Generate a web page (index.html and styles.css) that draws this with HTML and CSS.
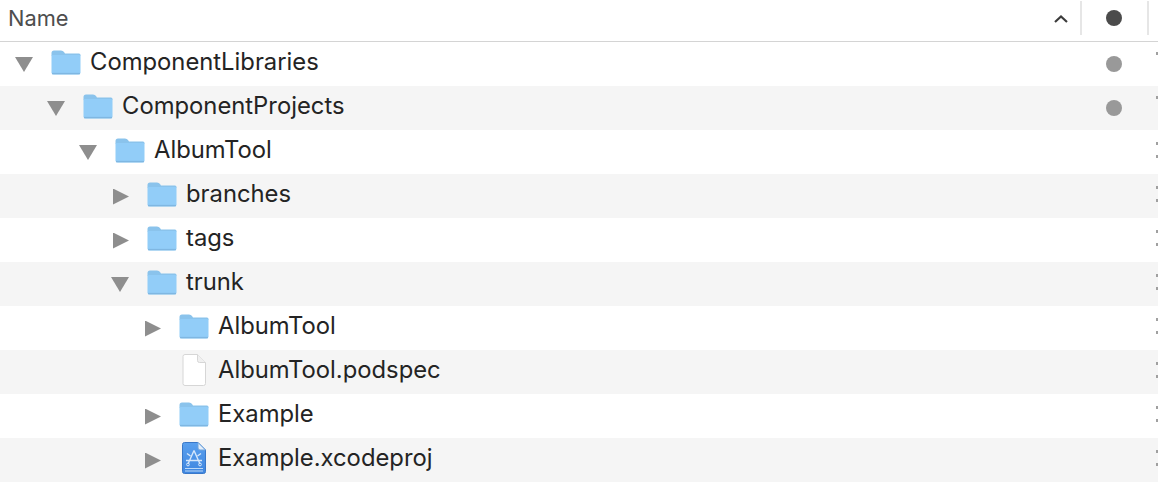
FILE: index.html
```html
<!DOCTYPE html>
<html lang="en">
<head>
    <meta charset="UTF-8">
    <meta name="viewport" content="width=device-width, initial-scale=1.0">
    <title>Finder list</title>
    <link rel="stylesheet" href="styles.css">
</head>
<body>
    <svg class="defs" width="0" height="0">
        <symbol id="folder" viewBox="0 0 30 25">
            <path d="M0.5 3 Q0.5 0.5 3 0.5 H10 Q12 0.5 13 2 L14 3.5 H28 Q29.5 3.5 29.5 5 V6 H0.5 Z" fill="#8ac3ec"/>
            <path d="M0.5 6 Q0.5 5 2 5 H28 Q29.5 5 29.5 6 V22.5 Q29.5 24.5 27.5 24.5 H2.5 Q0.5 24.5 0.5 22.5 Z" fill="#92cdf8"/>
            <path d="M1 23.6 H29" stroke="#7fb7e2" stroke-width="1.4"/>
        </symbol>
        <linearGradient id="xcode-fill" x1="0" y1="0" x2="0" y2="1">
            <stop offset="0" stop-color="#5aa0ee"/>
            <stop offset="1" stop-color="#3f86e0"/>
        </linearGradient>
    </svg>

    <div class="header">
        <span class="header-name">Name</span>
        <svg class="caret" width="16" height="10" viewBox="0 0 16 10">
            <path d="M2 8 L8 2.5 L14 8" fill="none" stroke="#3c3c3c" stroke-width="2.2"/>
        </svg>
        <span class="sep"></span>
        <span class="dot-col"><span class="dot dot-dark"></span></span>
        <span class="sep"></span>
    </div>

    <div class="row depth-0">
        <span class="arrow down"></span>
        <svg class="icon folder"><use href="#folder"/></svg>
        <span class="label">ComponentLibraries</span>
        <span class="dot-col"><span class="dot"></span></span>
        <span class="date one"></span>
    </div>
    <div class="row depth-1">
        <span class="arrow down"></span>
        <svg class="icon folder"><use href="#folder"/></svg>
        <span class="label">ComponentProjects</span>
        <span class="dot-col"><span class="dot"></span></span>
        <span class="date one"></span>
    </div>
    <div class="row depth-2">
        <span class="arrow down"></span>
        <svg class="icon folder"><use href="#folder"/></svg>
        <span class="label">AlbumTool</span>
        <span class="date"></span>
    </div>
    <div class="row depth-3">
        <span class="arrow right"></span>
        <svg class="icon folder"><use href="#folder"/></svg>
        <span class="label">branches</span>
        <span class="date"></span>
    </div>
    <div class="row depth-3">
        <span class="arrow right"></span>
        <svg class="icon folder"><use href="#folder"/></svg>
        <span class="label">tags</span>
        <span class="date"></span>
    </div>
    <div class="row depth-3">
        <span class="arrow down"></span>
        <svg class="icon folder"><use href="#folder"/></svg>
        <span class="label">trunk</span>
        <span class="date"></span>
    </div>
    <div class="row depth-4">
        <span class="arrow right"></span>
        <svg class="icon folder"><use href="#folder"/></svg>
        <span class="label">AlbumTool</span>
        <span class="date"></span>
    </div>
    <div class="row depth-4">
        <span class="arrow none"></span>
        <svg class="icon doc" viewBox="0 0 24 32">
            <path d="M1 2.5 Q1 0.5 3 0.5 H15.5 L23.5 8.5 V29.5 Q23.5 31.5 21.5 31.5 H3 Q1 31.5 1 29.5 Z" fill="#fff" stroke="#d6d6d6"/>
            <path d="M15.5 0.5 V6.5 Q15.5 8.5 17.5 8.5 H23.5" fill="#f0f0f0" stroke="#d6d6d6"/>
        </svg>
        <span class="label">AlbumTool.podspec</span>
        <span class="date"></span>
    </div>
    <div class="row depth-4">
        <span class="arrow right"></span>
        <svg class="icon folder"><use href="#folder"/></svg>
        <span class="label">Example</span>
        <span class="date"></span>
    </div>
    <div class="row depth-4">
        <span class="arrow right"></span>
        <svg class="icon doc" viewBox="0 0 24 32">
            <path d="M0.5 2.5 Q0.5 0.5 2.5 0.5 H16 L23.5 8 V29.5 Q23.5 31.5 21.5 31.5 H2.5 Q0.5 31.5 0.5 29.5 Z" fill="url(#xcode-fill)" stroke="#3a78c8"/>
            <path d="M16 0.5 V6 Q16 8 18 8 H23.5 Z" fill="#e4eef9" stroke="#6fa3dc"/>
            <path d="M3 26.5 H21 M3 29 H21" stroke="#bcd9f7" stroke-width="1"/>
            <path d="M12 8.5 L6 22 M12 8.5 L18 22 M4 18.5 H20 M8.5 14 L5 11.5 M15.5 14 L19 11.5" fill="none" stroke="#d6e7fb" stroke-width="1.4"/>
            <circle cx="6" cy="22.5" r="1.4" fill="none" stroke="#d6e7fb"/>
            <circle cx="18" cy="22.5" r="1.4" fill="none" stroke="#d6e7fb"/>
        </svg>
        <span class="label">Example.xcodeproj</span>
        <span class="date"></span>
    </div>
</body>
</html>
```

FILE: styles.css
```css
html, body {
    margin: 0;
    height: 100%;
    overflow: hidden;
}
body {
    background-color: #fff;
    font-family: 'Inter', 'Liberation Sans', sans-serif;
    color: #242424;
}
.defs {
    display: block;
    height: 0;
}
.header {
    display: flex;
    align-items: flex-start;
    height: 41px;
    border-bottom: 1px solid #d4d4d4;
}
.header-name {
    flex: 1;
    padding-left: 8px;
    font-size: 21.8px;
    line-height: 36px;
    color: #4e4e4e;
}
.caret {
    margin-top: 14px;
    margin-right: 11px;
}
.sep {
    width: 2px;
    height: 34px;
    margin-top: 1px;
    background-color: #e6e6e6;
}
.header .dot-col {
    height: 36px;
    width: 64px;
    margin-right: 1px;
}
.header .sep:last-child {
    margin-right: 9px;
}
.dot-col {
    display: flex;
    align-items: center;
    justify-content: center;
    width: 65px;
    margin-right: 12px;
}
.dot {
    width: 16px;
    height: 16px;
    border-radius: 50%;
    background-color: #999;
}
.dot-dark {
    background-color: #4b4b4b;
}
.row {
    display: flex;
    align-items: center;
    height: 44px;
    font-size: 23.8px;
    position: relative;
}
.row:nth-of-type(odd) {
    background-color: #f5f5f5;
}
.depth-0 { padding-left: 16px; }
.depth-1 { padding-left: 48px; }
.depth-2 { padding-left: 80px; }
.depth-3 { padding-left: 112px; }
.depth-4 { padding-left: 144px; }
.arrow {
    width: 18px;
    height: 16px;
    margin-right: 17px;
    flex-shrink: 0;
}
.arrow.down {
    height: 15px;
    margin-top: 1px;
    margin-left: -1px;
    margin-right: 18px;
    background-color: #8e8e8e;
    clip-path: polygon(0 0, 100% 0, 50% 100%);
}
.arrow.right {
    width: 16px;
    margin-left: 1px;
    margin-right: 18px;
    margin-top: 1px;
    background-color: #8e8e8e;
    clip-path: polygon(0 0, 100% 50%, 0 100%);
}
.icon {
    flex-shrink: 0;
    margin-right: 9px;
}
.folder {
    width: 30px;
    height: 25px;
    margin-top: -3px;
}
.doc {
    width: 24px;
    height: 32px;
    margin-left: 3px;
    margin-right: 12px;
    margin-top: -5px;
}
.label {
    flex: 1;
    white-space: nowrap;
    margin-top: -5px;
}
/* clipped date column, only the colon shows at the window edge */
.date {
    position: absolute;
    right: 0;
    top: 12px;
    width: 2px;
    height: 3px;
    background-color: #a0a0a0;
    box-shadow: 0 13px 0 #a0a0a0;
}
.date.one {
    top: 10px;
    box-shadow: none;
}
```
